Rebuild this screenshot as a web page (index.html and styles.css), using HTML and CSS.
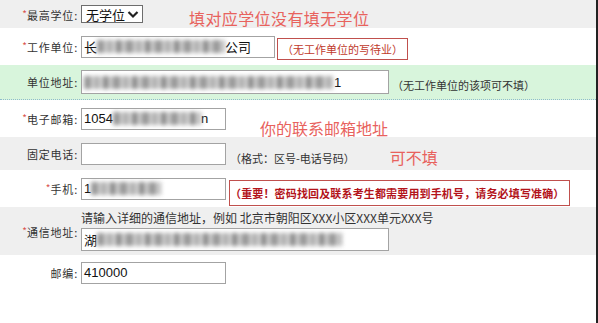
FILE: index.html
```html
<!DOCTYPE html>
<html>
<head>
  <title>考生信息</title>
  <link rel="stylesheet" href="styles.css">
</head>
<body>
  <div class="page">
    <div class="row gray h28">
      <div class="lbl"><span class="req">*</span>最高学位:</div>
      <div class="fld">
        <span class="sel">无学位
          <svg width="12" height="9" viewBox="0 0 12 9"><path d="M1.5 2 L6 6.5 L10.5 2" fill="none" stroke="#222" stroke-width="2.2"/></svg>
        </span>
        <span class="mark first">填对应学位没有填无学位</span>
      </div>
    </div>

    <div class="row h37">
      <div class="lbl"><span class="req">*</span>工作单位:</div>
      <div class="fld">
        <span class="inp w194">长<span class="blur" style="width:128px"></span>公司</span>
        <span class="box">（无工作单位的写待业）</span>
      </div>
    </div>

    <div class="row green h35">
      <div class="lbl">单位地址:</div>
      <div class="fld">
        <span class="inp w308 tall"><span class="blur" style="width:250px"></span>1</span>
        <span class="note">（无工作单位的该项可不填）</span>
      </div>
    </div>

    <div class="row h37">
      <div class="lbl"><span class="req">*</span>电子邮箱:</div>
      <div class="fld">
        <span class="inp w145">1054<span class="blur" style="width:88px"></span>n</span>
      </div>
      <span class="mark float">你的联系邮箱地址</span>
    </div>

    <div class="row gray h33">
      <div class="lbl">固定电话:</div>
      <div class="fld">
        <span class="inp w145"></span>
        <span class="note small">（格式：区号-电话号码）</span>
        <span class="mark low">可不填</span>
      </div>
    </div>

    <div class="row h37">
      <div class="lbl"><span class="req">*</span>手机:</div>
      <div class="fld">
        <span class="inp w145">1<span class="blur" style="width:70px"></span></span>
        <span class="box wide">（重要！密码找回及联系考生都需要用到手机号，请务必填写准确）</span>
      </div>
    </div>

    <div class="row gray h48">
      <div class="lbl"><span class="req">*</span>通信地址:</div>
      <div class="fld col">
        <span class="hint">请输入详细的通信地址，例如 北京市朝阳区XXX小区XXX单元XXX号</span>
        <span class="inp w308 mid">湖<span class="blur" style="width:245px"></span></span>
      </div>
    </div>

    <div class="row h35">
      <div class="lbl">邮编:</div>
      <div class="fld">
        <span class="inp w145">410000</span>
      </div>
    </div>
  </div>
</body>
</html>
```

FILE: styles.css
```css
body {
  margin: 0;
  background: #fff;
  font-family: "Noto Sans CJK SC", sans-serif;
  color: #333;
}

.page {
  width: 596px;
  height: 323px;
  border-right: 2px solid #222;
}

.row {
  position: relative;
  display: flex;
  align-items: center;
}

.h28 { height: 28px; }
.h33 { height: 33px; }
.h35 { height: 35px; }
.h37 { height: 37px; }
.h48 { height: 48px; }

.gray {
  background: #efefef;
}

.green {
  background: #d8f5dc;
  border-bottom: 1px dotted #8fbccc;
  height: 34px;
}

.lbl {
  width: 78px;
  padding-right: 3px;
  text-align: right;
  font-size: 11px;
  letter-spacing: 0.8px;
  line-height: 14px;
  flex: none;
}

.req {
  color: #d9534f;
  font-size: 10px;
  vertical-align: 2px;
  letter-spacing: 0;
}

.fld {
  display: flex;
  align-items: center;
  height: 100%;
}

.fld.col {
  flex-direction: column;
  align-items: flex-start;
  justify-content: center;
  gap: 3px;
}

.sel {
  display: flex;
  align-items: center;
  justify-content: space-between;
  box-sizing: border-box;
  width: 62px;
  height: 18px;
  padding: 0 3px 0 4px;
  border: 1px solid #6d6d6d;
  background: #fff;
  font-size: 13px;
  color: #111;
}

.inp {
  display: flex;
  align-items: center;
  box-sizing: border-box;
  height: 22px;
  padding-left: 2px;
  border: 1px solid #a3a3a3;
  background: #fff;
  font-family: "Liberation Sans", "Noto Sans CJK SC", sans-serif;
  font-size: 13px;
  color: #111;
  overflow: hidden;
}

.inp.tall { height: 24px; }
.inp.mid { height: 23px; }

.w145 { width: 145px; }
.w194 { width: 194px; }
.w308 { width: 308px; }

.blur {
  display: inline-block;
  height: 13px;
  background: repeating-linear-gradient(90deg, #8d8d8d 0 7px, #cfcfcf 7px 10px, #a8a8a8 10px 16px, #dedede 16px 19px, #7a7a7a 19px 24px, #c4c4c4 24px 29px);
  filter: blur(2px);
  opacity: 0.9;
}

.box {
  margin-left: 2px;
  margin-top: 4px;
  padding: 0 4px;
  height: 20px;
  line-height: 20px;
  border: 1px solid #c0504d;
  font-size: 11px;
  color: #c0392b;
  white-space: nowrap;
}

.box.wide {
  margin-left: 3px;
  margin-top: 8px;
  height: 24px;
  line-height: 24px;
  padding: 0 4px 0 0;
  font-weight: bold;
  letter-spacing: 0.15px;
  color: #b3141b;
}

.note {
  margin-left: 3px;
  margin-top: 6px;
  font-size: 11px;
  color: #333;
  white-space: nowrap;
}

.note.small {
  margin-left: 4px;
  margin-top: 8px;
}

.hint {
  font-size: 12px;
  line-height: 14px;
  white-space: nowrap;
}

.mark {
  font-size: 16px;
  line-height: 20px;
  color: #e8625d;
  white-space: nowrap;
}

.mark.first {
  align-self: flex-end;
  margin-left: 46px;
  letter-spacing: 0.4px;
}

.mark.low {
  margin-left: 35px;
  margin-top: 6px;
}

.mark.float {
  position: absolute;
  left: 260px;
  top: 18px;
}
```
